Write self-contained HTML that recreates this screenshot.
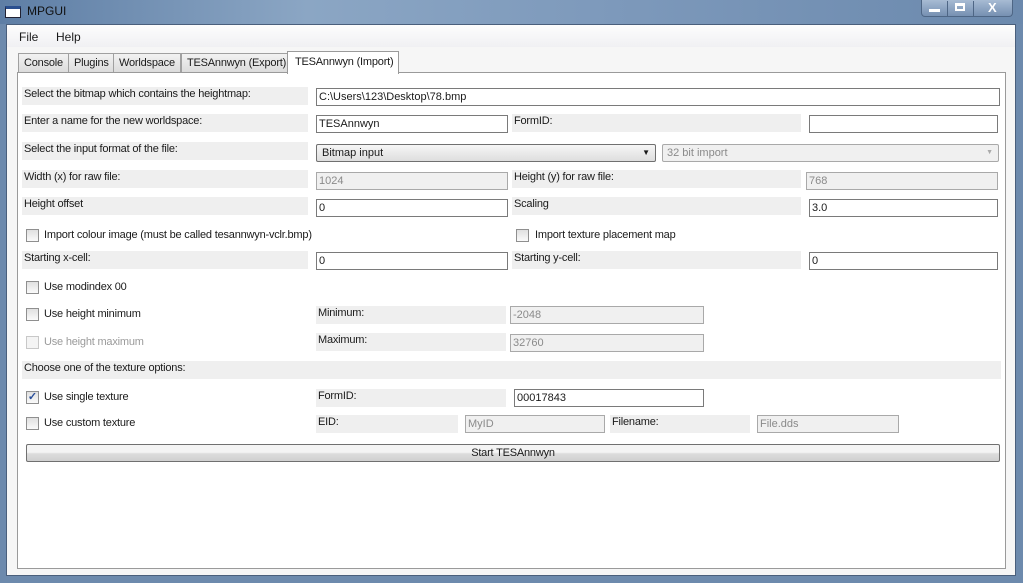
<!DOCTYPE html>
<html><head><style>
*{margin:0;padding:0;box-sizing:border-box}
body{width:1023px;height:583px;overflow:hidden;background:#6d8aad;font-family:"Liberation Sans",sans-serif;font-size:11px;color:#1a1a1a;position:relative}
.a{position:absolute}
.lb{position:absolute;background:#efefef;height:18px;line-height:15px;padding-left:2px;letter-spacing:-0.2px}
.in{position:absolute;background:#fff;border:1px solid #7a7a7a;height:18px;line-height:16px;padding-left:2px}
.dis{background:#f0f0f0;border-color:#a9a9a9;color:#8a8a8a}
.cb{position:absolute;width:13px;height:13px;border:1px solid #8f8f8f;background:linear-gradient(#e0e0e0,#fafafa)}
.ct{position:absolute;line-height:13px;letter-spacing:-0.2px}
.tab{position:absolute;top:53px;height:19px;border:1px solid #a0a0a0;border-bottom:none;background:linear-gradient(#f2f2f2,#dcdcdc);line-height:18px;padding:0 5px;letter-spacing:-0.2px}
</style></head><body>
<div class="a" style="left:0;top:0;width:1023px;height:24px;background:linear-gradient(90deg,#5e7ea5,#8ba6c4 30%,#7d99bb 60%,#6b89ad)"></div>
<div class="a" style="left:5px;top:6px;width:16px;height:12px;border:1px solid #223;background:#fff;border-top:3px solid #2a4f8f"></div>
<div class="a" style="left:27px;top:4px;font-size:12px;color:#111">MPGUI</div>
<div class="a" style="left:921px;top:0;width:92px;height:17px;border:1px solid #4e6685;border-top:none;border-radius:0 0 4px 4px;background:linear-gradient(#a7bbd3,#7690b2)"></div>
<div class="a" style="left:947px;top:1px;width:1px;height:15px;background:#4e6685"></div>
<div class="a" style="left:973px;top:1px;width:1px;height:15px;background:#4e6685"></div>
<div class="a" style="left:929px;top:9px;width:11px;height:3px;background:#fff"></div>
<div class="a" style="left:955px;top:3px;width:10px;height:8px;border:2px solid #fff;border-top-width:3px"></div>
<div class="a" style="left:988px;top:0px;color:#fff;font-weight:bold;font-size:13px">X</div>
<div class="a" style="left:6px;top:24px;width:1010px;height:552px;background:#f6f6f6;border:1px solid #4a5f7c"></div>
<div class="a" style="left:7px;top:25px;width:1008px;height:22px;background:linear-gradient(#fdfdfd,#f0f0f3)"></div>
<div class="a" style="left:19px;top:30px;font-size:12px">File</div>
<div class="a" style="left:56px;top:30px;font-size:12px">Help</div>
<div class="tab" style="left:18px">Console</div>
<div class="tab" style="left:68px">Plugins</div>
<div class="tab" style="left:113px">Worldspace</div>
<div class="tab" style="left:181px">TESAnnwyn (Export)</div>
<div class="a" style="left:17px;top:72px;width:989px;height:497px;background:#fff;border:1px solid #9a9a9a"></div>
<div class="a" style="left:287px;top:51px;width:112px;height:23px;background:#fff;border:1px solid #9a9a9a;border-bottom:none;line-height:20px;padding-left:7px;letter-spacing:-0.2px">TESAnnwyn (Import)</div>

<div class="lb" style="left:22px;top:87px;width:286px">Select the bitmap which contains the heightmap:</div>
<div class="in" style="left:316px;top:88px;width:684px">C:\Users\123\Desktop\78.bmp</div>

<div class="lb" style="left:22px;top:114px;width:286px">Enter a name for the new worldspace:</div>
<div class="in" style="left:316px;top:115px;width:192px">TESAnnwyn</div>
<div class="lb" style="left:512px;top:114px;width:289px">FormID:</div>
<div class="in" style="left:809px;top:115px;width:189px"></div>

<div class="lb" style="left:22px;top:142px;width:286px">Select the input format of the file:</div>
<div class="in" style="left:316px;top:144px;width:340px;border-color:#707070;background:linear-gradient(#f6f6f6,#dedede);border-radius:2px;padding-left:5px">Bitmap input<span style="position:absolute;right:5px;top:0;font-size:8px">▼</span></div>
<div class="in dis" style="left:662px;top:144px;width:337px;border-radius:2px;padding-left:4px">32 bit import<span style="position:absolute;right:5px;top:0;font-size:7px;color:#aaa">▼</span></div>

<div class="lb" style="left:22px;top:170px;width:286px">Width (x) for raw file:</div>
<div class="in dis" style="left:316px;top:172px;width:192px">1024</div>
<div class="lb" style="left:512px;top:170px;width:289px">Height (y) for raw file:</div>
<div class="in dis" style="left:806px;top:172px;width:192px">768</div>

<div class="lb" style="left:22px;top:197px;width:286px">Height offset</div>
<div class="in" style="left:316px;top:199px;width:192px">0</div>
<div class="lb" style="left:512px;top:197px;width:289px">Scaling</div>
<div class="in" style="left:809px;top:199px;width:189px">3.0</div>

<div class="cb" style="left:26px;top:229px"></div><div class="ct" style="left:44px;top:229px">Import colour image (must be called tesannwyn-vclr.bmp)</div>
<div class="cb" style="left:516px;top:229px"></div><div class="ct" style="left:535px;top:229px">Import texture placement map</div>

<div class="lb" style="left:22px;top:251px;width:286px">Starting x-cell:</div>
<div class="in" style="left:316px;top:252px;width:192px">0</div>
<div class="lb" style="left:512px;top:251px;width:289px">Starting y-cell:</div>
<div class="in" style="left:809px;top:252px;width:189px">0</div>

<div class="cb" style="left:26px;top:281px"></div><div class="ct" style="left:44px;top:281px">Use modindex 00</div>
<div class="cb" style="left:26px;top:308px"></div><div class="ct" style="left:44px;top:308px">Use height minimum</div>
<div class="lb" style="left:316px;top:306px;width:190px">Minimum:</div>
<div class="in dis" style="left:510px;top:306px;width:194px">-2048</div>
<div class="cb" style="left:26px;top:336px;border-color:#c8c8c8;background:#f4f4f4"></div><div class="ct" style="left:44px;top:336px;color:#9a9a9a">Use height maximum</div>
<div class="lb" style="left:316px;top:333px;width:190px">Maximum:</div>
<div class="in dis" style="left:510px;top:334px;width:194px">32760</div>

<div class="lb" style="left:22px;top:361px;width:979px">Choose one of the texture options:</div>

<div class="cb" style="left:26px;top:391px;color:#2a4f9a;font-size:11px;line-height:11px;text-align:center;font-weight:bold">✓</div><div class="ct" style="left:44px;top:391px">Use single texture</div>
<div class="lb" style="left:316px;top:389px;width:190px">FormID:</div>
<div class="in" style="left:514px;top:389px;width:190px">00017843</div>
<div class="cb" style="left:26px;top:417px"></div><div class="ct" style="left:44px;top:417px">Use custom texture</div>
<div class="lb" style="left:316px;top:415px;width:142px">EID:</div>
<div class="in dis" style="left:465px;top:415px;width:140px">MyID</div>
<div class="lb" style="left:610px;top:415px;width:140px">Filename:</div>
<div class="in dis" style="left:757px;top:415px;width:142px">File.dds</div>

<div class="a" style="left:26px;top:444px;width:974px;height:18px;border:1px solid #707070;border-radius:2px;background:linear-gradient(#f4f4f4 45%,#dcdcdc 55%,#d0d0d0);text-align:center;line-height:16px;letter-spacing:-0.2px">Start TESAnnwyn</div>
</body></html>
